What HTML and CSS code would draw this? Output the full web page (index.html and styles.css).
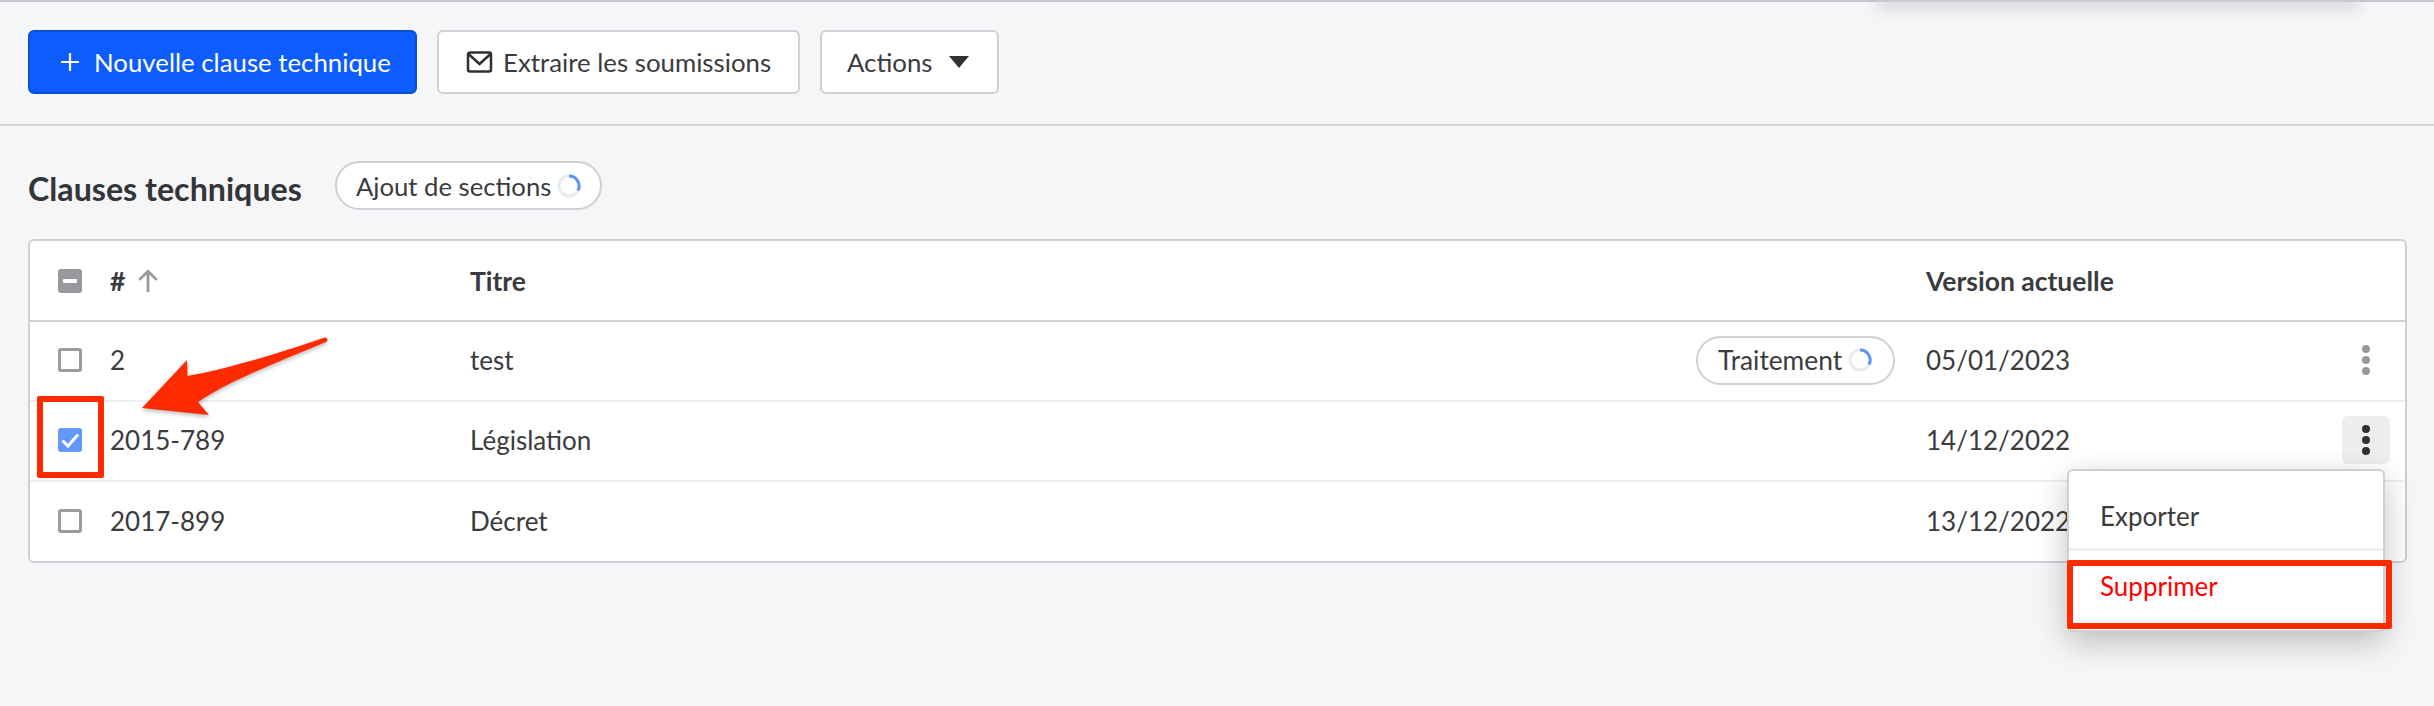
FILE: index.html
```html
<!DOCTYPE html>
<html lang="fr">
<head>
<meta charset="utf-8">
<title>Clauses techniques</title>
<link rel="stylesheet" href="styles.css">
</head>
<body>
<div class="page">
  <div class="top-shadow"></div>
  <header class="toolbar">
    <button class="btn btn-primary">
      <svg class="ic-plus" viewBox="0 0 20 20"><path d="M10 1v18M1 10h18"/></svg>
      Nouvelle clause technique
    </button>
    <button class="btn btn-extract">
      <svg class="ic-mail" viewBox="0 0 26 22"><path d="M3.500 1.500h19a2 2 0 0 1 2 2v15a2 2 0 0 1-2 2h-19a2 2 0 0 1-2-2v-15a2 2 0 0 1 2-2z"/><path d="M2 3l11 10L24 3"/></svg>
      Extraire les soumissions
    </button>
    <button class="btn btn-actions">
      Actions
      <svg class="ic-caret" viewBox="0 0 20 12"><path d="M0 0h20L10 12z"/></svg>
    </button>
  </header>

  <section class="content">
    <div class="heading">
      <h2 class="title">Clauses techniques</h2>
      <span class="pill pill-sections">Ajout de sections
        <svg class="spinner" viewBox="0 0 24 24"><circle class="sp-track" cx="12" cy="12" r="10"/><path class="sp-arc" d="M12 2a10 10 0 0 1 9 14.500"/></svg>
      </span>
    </div>

    <div class="table">
      <div class="row row-head">
        <div class="c-check"><span class="cb cb-minus"><i></i></span></div>
        <div class="c-num">#
          <svg class="ic-up" viewBox="0 0 20 22"><path d="M10 21V2M2 10l8-8 8 8"/></svg>
        </div>
        <div class="c-title">Titre</div>
        <div class="c-version">Version actuelle</div>
      </div>
      <div class="row">
        <div class="c-check"><span class="cb"></span></div>
        <div class="c-num">2</div>
        <div class="c-title">test
          <span class="pill pill-status">Traitement
            <svg class="spinner" viewBox="0 0 24 24"><circle class="sp-track" cx="12" cy="12" r="10"/><path class="sp-arc" d="M12 2a10 10 0 0 1 9 14.500"/></svg>
          </span>
        </div>
        <div class="c-version">05/01/2023</div>
        <div class="c-more"><span class="more"><i></i><i></i><i></i></span></div>
      </div>
      <div class="row">
        <div class="c-check"><span class="cb cb-checked"><svg viewBox="0 0 24 24"><path d="M4.500 12.500l5.500 5.500L20 6.500"/></svg></span></div>
        <div class="c-num">2015-789</div>
        <div class="c-title">Législation</div>
        <div class="c-version">14/12/2022</div>
        <div class="c-more"><span class="more more-active"><i></i><i></i><i></i></span></div>
      </div>
      <div class="row row-last">
        <div class="c-check"><span class="cb"></span></div>
        <div class="c-num">2017-899</div>
        <div class="c-title">Décret</div>
        <div class="c-version">13/12/2022</div>
      </div>
    </div>
  </section>

  <div class="menu">
    <div class="menu-item menu-export">Exporter</div>
    <div class="menu-item menu-delete">Supprimer</div>
  </div>

  <div class="mark mark-check"></div>
  <div class="mark mark-delete"></div>
  <svg class="arrow" viewBox="0 0 200 90"><path d="M185 2.500C187.500 2.500 188.500 5.500 186 7 150 22 90 45 58 67L69 80 2 73 47 25 47.500 41C80 36 140 18 185 2.500z"/></svg>
</div>
</body>
</html>
```
FILE: styles.css
```css
* { box-sizing: border-box; }
html, body { margin: 0; height: 100%; }
body {
  background: #f5f6f8;
  color: #3a3b3e;
  font-family: Lato, "Liberation Sans", sans-serif;
  font-size: 26px;
  overflow: hidden;
}
.page { position: relative; width: 2434px; height: 706px; border-top: 2px solid #c9cacf; }
.top-shadow {
  position: absolute; left: 1876px; top: -6px; width: 484px; height: 6px;
  box-shadow: 0 4px 16px rgba(0,0,0,.28);
}
.toolbar {
  display: flex; gap: 20px; align-items: flex-start;
  height: 124px; padding: 28px 28px 0; border-bottom: 2px solid #d3d4d8;
}
.btn {
  display: inline-flex; align-items: center; justify-content: flex-start;
  height: 64px; padding: 0;
  background: #fff; color: #3a3b3e;
  border: 2px solid #cfd0d5; border-radius: 6px;
  font: inherit; font-size: 25.8px;
}
.btn-primary { width: 389px; background: #0d5cff; border-color: #0a4ed6; color: #fff; padding-left: 30px; gap: 14px; }
.btn-extract { width: 363px; padding-left: 27px; gap: 10px; }
.btn-actions { width: 179px; padding-left: 25px; gap: 16px; }
.ic-plus { width: 20px; height: 20px; fill: none; stroke: #fff; stroke-width: 2.2; }
.ic-mail { width: 27px; height: 22px; fill: none; stroke: #303134; stroke-width: 2.500; }
.ic-caret { width: 20px; height: 12px; fill: #303134; }

.content { padding: 0 27px 0 28px; }
.heading { display: flex; align-items: center; height: 113px; gap: 33px; padding-top: 5px; }
.title { margin: 6px 0 0; font-size: 32.2px; font-weight: 700; color: #343538; }
.pill {
  display: inline-flex; align-items: center; gap: 6px;
  height: 49px; background: #fff;
  border: 2px solid #cfd0d5; border-radius: 25px;
  font-size: 26px; font-weight: 400; color: #3a3b3e;
}
.pill-sections { width: 267px; padding-left: 19px; margin-top: 1px; font-size: 25.7px; }
.pill-status { width: 199px; padding-left: 20px; font-size: 26.3px; }
.spinner { width: 24px; height: 24px; fill: none; flex: none; }
.sp-track { stroke: #e9ebef; stroke-width: 3; }
.sp-arc { stroke: #5b93f7; stroke-width: 3; }

.table {
  width: 2379px; background: #fff;
  border: 2px solid #cfd0d5; border-radius: 6px;
}
.row {
  display: flex; align-items: center; height: 80px; padding-bottom: 2px;
  border-bottom: 2px solid #eeeff1;
}
.row-head { height: 81px; padding-bottom: 0; border-bottom-color: #d0d1d6; font-weight: 700; font-size: 26.5px; }
.row-last { border-bottom: 0; height: 79px; }
.c-check { width: 80px; padding-left: 28px; display: flex; }
.c-num { width: 360px; display: flex; align-items: center; gap: 12px; }
.c-title { width: 1456px; padding-right: 31px; display: flex; align-items: center; justify-content: space-between; }
.c-version { width: 400px; }
.c-more { width: 48px; display: flex; justify-content: center; margin-left: 16px; }
.cb {
  display: flex; align-items: center; justify-content: center;
  width: 24px; height: 24px; background: #fff;
  border: 3px solid #9a9ba0; border-radius: 3px;
}
.cb-minus { background: #98999e; border-color: #98999e; }
.cb-minus i { width: 14px; height: 4px; background: #fff; border-radius: 1px; }
.cb-checked { background: #6497fa; border-color: #6497fa; }
.cb-checked svg { width: 24px; height: 24px; flex: none; fill: none; stroke: #fff; stroke-width: 3; }
.ic-up { width: 22px; height: 24px; fill: none; stroke: #98999e; stroke-width: 2.500; }
.more {
  display: flex; flex-direction: column; align-items: center; justify-content: center; gap: 3px;
  width: 48px; height: 48px; border-radius: 6px;
}
.more i { width: 8px; height: 8px; border-radius: 50%; background: #98999e; }
.more-active { background: #edeef0; }
.more-active i { background: #303134; }

.menu {
  position: absolute; left: 2067px; top: 467px; width: 318px; height: 163px;
  background: #fff; border: 2px solid #cfd0d5; border-radius: 6px;
  box-shadow: 0 10px 32px rgba(0,0,0,.24);
}
.menu-item { padding-left: 31px; line-height: 30px; }
.menu-export { height: 80px; padding-top: 30px; border-bottom: 3px solid #eeeff1; }
.menu-delete { padding-top: 20px; color: #ff0000; }

.mark { position: absolute; border: 6px solid #ff2a00; border-radius: 2px; }
.mark-check { left: 37px; top: 394px; width: 67px; height: 82px; }
.mark-delete { left: 2067px; top: 558px; width: 325px; height: 69px; }
.arrow {
  position: absolute; left: 140px; top: 333px; width: 200px; height: 90px;
  fill: #ff2a00; filter: drop-shadow(0 2px 2px rgba(0,0,0,.28));
}
```
